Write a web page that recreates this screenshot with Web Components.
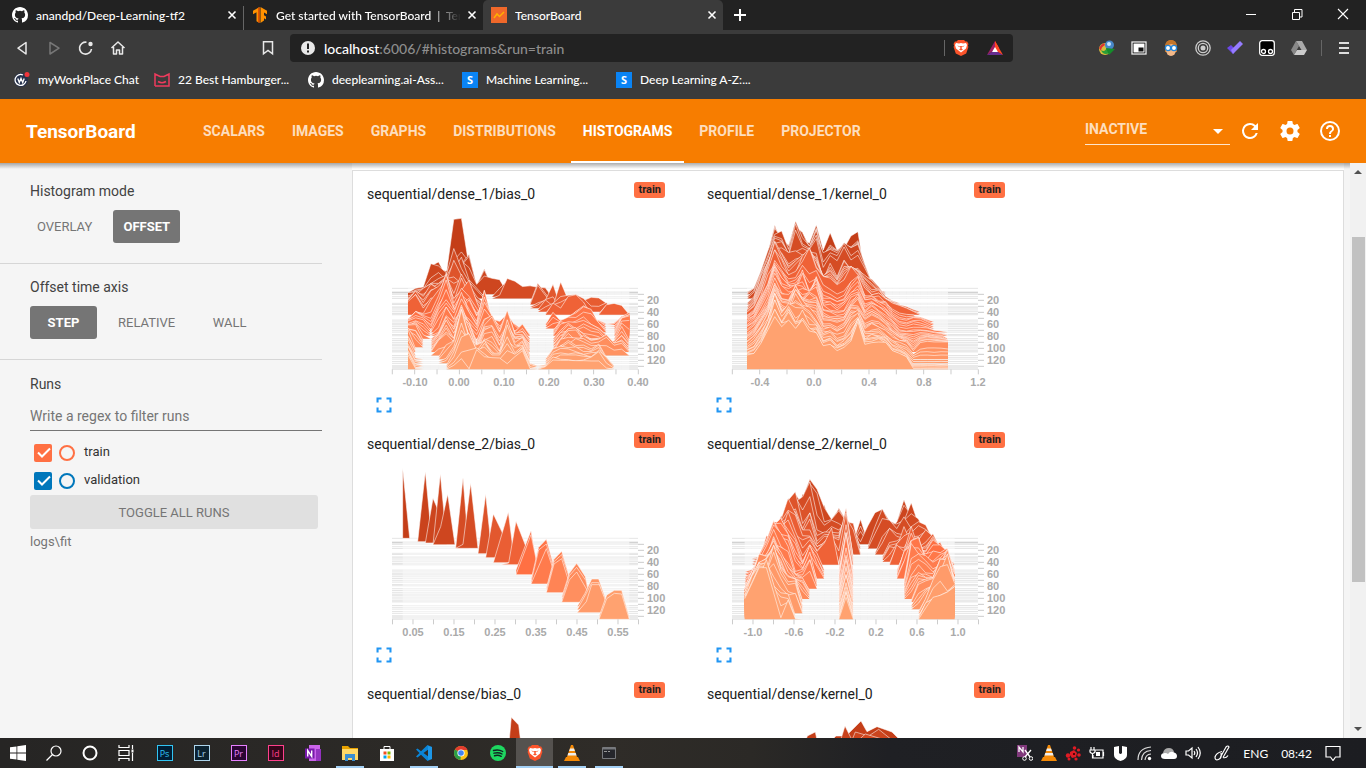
<!DOCTYPE html>
<html lang="en">
<head>
<meta charset="utf-8">
<title>TensorBoard</title>
<style>
html,body{margin:0;height:100%;overflow:hidden}
body{font-family:Roboto,"Liberation Sans",sans-serif;font-size:14px;color:#424242;background:#f5f5f5}
</style>
</head>
<body>
<desktop-screen></desktop-screen>
<script>
const define = (name, html, setup) => customElements.define(name, class extends HTMLElement {
  connectedCallback() {
    if (this.shadowRoot) return;
    const t = document.createElement('template');
    t.innerHTML = '<style>*{box-sizing:border-box}button{font:inherit;border:0;background:none;padding:0;color:inherit}svg{display:block}a{color:inherit;text-decoration:none}</style>' +
      (typeof html === 'function' ? html(this) : html);
    this.attachShadow({mode: 'open'}).append(t.content.cloneNode(true));
    if (setup) setup(this);
  }
});
const CAT = '<path fill="#fff" d="M8 0C3.58 0 0 3.58 0 8c0 3.54 2.29 6.53 5.47 7.59.4.07.55-.17.55-.38 0-.19-.01-.82-.01-1.49-2.01.37-2.53-.49-2.69-.94-.09-.23-.48-.94-.82-1.13-.28-.15-.68-.52-.01-.53.63-.01 1.08.58 1.23.82.72 1.21 1.87.87 2.33.66.07-.52.28-.87.51-1.07-1.78-.2-3.64-.89-3.64-3.95 0-.87.31-1.59.82-2.15-.08-.2-.36-1.02.08-2.12 0 0 .67-.21 2.2.82a7.6 7.6 0 0 1 4 0c1.53-1.04 2.2-.82 2.2-.82.44 1.1.16 1.92.08 2.12.51.56.82 1.27.82 2.15 0 3.07-1.87 3.75-3.65 3.95.29.25.54.73.54 1.48 0 1.07-.01 1.93-.01 2.2 0 .21.15.46.55.38A8.01 8.01 0 0 0 16 8c0-4.42-3.58-8-8-8z"/>';
const LION = '<path fill="#fb542b" d="M5 0h6l1.500 1.600 1.600-.2 1.400 2.600-.6 1.500.5 1.500-2.200 6.500L8 16 2.800 13.500.6 7l.5-1.500L.5 4l1.400-2.600 1.600.2z"/><path fill="#fff" d="M3 3l3 .5L8 3l2 .5L13 3l1 2-1 3.500-2.500 2L8 12.500l-2.500-2L3 8.500 2 5z"/><path fill="#fb542b" d="M4.200 5.500l2.600.7-.3 1zM11.800 5.500l-2.600.7.3 1zM7 6h2l-.4 2.500L10 9.500 8 10.500 6 9.500l1.400-1z"/>';
const CONE = '<path fill="#f58a07" d="M7 0h2l4 12H3z"/><path fill="#eee" d="M6 3.500h4l.9 2.500H5.100zM4.300 8h7.400l.8 2.500h-9z"/><path fill="#f58a07" d="M2 12h12l2 4H0z"/>';
const ICONS = {
  github: CAT, brave: LION, cone: CONE,
  tensor: '<path fill="#ff9100" d="M7.500 0v16l-3-1.800V5.300L1 7.300V3.800zM8.500 0L15 3.800v3.500l-3-1.700v2.600l2 1.200v3l-2-1.200v2.200L8.500 16z"/><path fill="#e65100" d="M7.500 0v16l-1.500-1V1z"/>',
  board: '<path fill="#f0682a" d="M0 0h16v16H0z"/><path fill="none" stroke="#ffb000" stroke-width="1.500" d="M3 11l3-4 2.500 2.500L13 5"/>',
  close: '<path fill="none" stroke="#fff" stroke-width="1.800" d="M4 4l8 8M12 4l-8 8"/>',
  plus: '<path stroke="#fff" stroke-width="2" d="M8 2v12M2 8h12"/>',
  min: '<path stroke="#fff" d="M3 7.500h10"/>',
  max: '<path fill="none" stroke="#fff" d="M3.500 5.500h7v7h-7zM5.500 5v-2.500h7.500v7.500H11"/>',
  wclose: '<path stroke="#fff" d="M3 2l10 10M13 2L3 12" stroke-width="1.100"/>',
  back: '<path fill="none" stroke="#e8e8e8" stroke-width="1.500" stroke-linejoin="round" d="M12 2.500v11.500L4 8.200z"/>',
  fwd: '<path fill="none" stroke="#777" stroke-width="1.500" stroke-linejoin="round" d="M4 2.500v11.500l9-5.800z"/>',
  reload: '<path fill="none" stroke="#e8e8e8" stroke-width="1.600" d="M13.500 9A6 6 0 1 1 8.500 2.200"/><circle cx="12.500" cy="4" r="2.200" fill="#e8e8e8"/>',
  home: '<path fill="none" stroke="#e8e8e8" stroke-width="1.500" stroke-linejoin="round" d="M1.500 8L8 2l6.500 6M3.500 7v7h3V10h3v4h3V7"/>',
  mark: '<path fill="none" stroke="#e8e8e8" stroke-width="1.500" d="M3.500 1.800h9v12L8 10.500l-4.500 3.300z"/>',
  warn: '<circle cx="8" cy="8" r="7" fill="#e8e8e8"/><path fill="#222" d="M7 3.500h2V9H7zM7 10.500h2v2H7z"/>',
  bat: '<path fill="#ff4724" d="M8 1l4 7-4 2z"/><path fill="#9e1f63" d="M8 1L0 15l8-5z"/><path fill="#662d91" d="M0 15h16l-8-5z"/><path fill="#ff4724" d="M8 1l8 14-8-5z"/><path fill="#fff" d="M8 7l3 5H5z"/>',
  idm: '<circle cx="6" cy="9" r="6" fill="#d8bf3d"/><path fill="#d33" d="M0 8q1-3 5-5l1 2Q2 7 2 11z"/><path fill="#2c9e38" d="M2 10q4 3 6-3l3 6q-7 3-9-3z"/><circle cx="10.500" cy="5" r="4.500" fill="#4787c8"/><circle cx="10" cy="4" r="2" fill="#c5e3ff"/><path fill="#158c2b" d="M7 8l9 1-6 6z"/>',
  pip: '<rect x="1" y="2" width="14" height="12" fill="#111" stroke="#eee" stroke-width="1.300"/><path fill="#fff" d="M2.500 3.500h11v9h-11z"/><path fill="#111" d="M7.500 7.500h5v4h-5z"/>',
  face: '<path fill="#c4762b" d="M2 12V6q1-6 6-6t6 6v6z"/><ellipse cx="8" cy="10" rx="5" ry="6" fill="#f3b98a"/><path fill="#c4762b" d="M2 5q2-5 6-5t6 5l-5-1z"/><circle cx="5" cy="8" r="2.600" fill="#fff" stroke="#2186dd" stroke-width="1.300"/><circle cx="11" cy="8" r="2.600" fill="#fff" stroke="#2186dd" stroke-width="1.300"/>',
  target: '<g fill="none" stroke="#ccc" stroke-width="1.300"><circle cx="8" cy="8" r="7.200"/><circle cx="8" cy="8" r="4.700"/></g><circle cx="8" cy="8" r="2.500" fill="#ccc"/>',
  tick: '<path fill="#6c48e8" d="M0 8l4-3 5 5-3 4z"/><path fill="#957cff" d="M6 14l-2-4 9-9 3 3z"/>',
  panda: '<rect x=".7" y=".7" width="14.600" height="14.600" rx="2.500" fill="#000" stroke="#fff" stroke-width="1.300"/><g fill="none" stroke="#fff" stroke-width="1.300"><circle cx="4.500" cy="11.500" r="2"/><circle cx="11.500" cy="11.500" r="2"/></g>',
  drive: '<path fill="#888" d="M5 1L0 10l3 5 5-9z"/><path fill="#aaa" d="M5 1h6l5 9h-5.500z"/><path fill="#ccc" d="M3 15l3-5h10l-3 5z"/>',
  menu: '<path stroke="#ddd" stroke-width="2" d="M3 3h10M3 8h10M3 13h10"/>',
  chat: '<circle cx="7" cy="8" r="7" fill="#26324d"/><path fill="none" stroke="#fff" stroke-width="1.300" d="M12 9a5.500 5.500 0 1 1-3-6M3.800 6.500l1.500 4 1.700-4 1.700 4 1.500-4"/><circle cx="13" cy="2.500" r="2.500" fill="#f0353b"/>',
  burger: '<path fill="none" stroke="#ef3b5d" stroke-width="1.500" d="M1 14V2l5 2.500h4L15 2v12H1M4 9.500q4 2.500 8 0"/>',
  refresh: '<path fill="#fff" d="M17.650 6.350A7.960 7.960 0 0 0 12 4a8 8 0 1 0 7.730 10h-2.080A6 6 0 1 1 12 6c1.660 0 3.140.69 4.220 1.780L13 11h7V4z"/>',
  gear: '<path fill="#fff" d="M19.430 12.980c.04-.32.07-.64.07-.98s-.03-.66-.07-.98l2.110-1.650c.19-.15.24-.42.12-.64l-2-3.460c-.12-.22-.39-.3-.61-.22l-2.490 1c-.52-.4-1.080-.73-1.690-.98l-.38-2.650A.488.488 0 0 0 14 2h-4c-.25 0-.46.18-.49.42l-.38 2.650c-.61.25-1.170.59-1.690.98l-2.490-1c-.23-.09-.49 0-.61.22l-2 3.460c-.13.22-.07.49.12.64l2.110 1.650c-.04.32-.07.65-.07.98s.03.66.07.98l-2.110 1.650c-.19.15-.24.42-.12.64l2 3.460c.12.22.39.3.61.22l2.490-1c.52.4 1.080.73 1.690.98l.38 2.650c.03.24.24.42.49.42h4c.25 0 .46-.18.49-.42l.38-2.650c.61-.25 1.170-.59 1.690-.98l2.490 1c.23.09.49 0 .61-.22l2-3.460c.12-.22.07-.49-.12-.64zM12 15.500a3.500 3.500 0 1 1 0-7 3.500 3.500 0 0 1 0 7z"/>',
  help: '<path fill="#fff" d="M11 18h2v-2h-2v2zm1-16a10 10 0 1 0 0 20 10 10 0 0 0 0-20zm0 18a8 8 0 1 1 0-16 8 8 0 0 1 0 16zm0-14a4 4 0 0 0-4 4h2c0-1.100.9-2 2-2s2 .9 2 2c0 2-3 1.750-3 5h2c0-2.250 3-2.500 3-5a4 4 0 0 0-4-4z"/>',
  full: '<path fill="#2196f3" d="M3 3h6v2.500H5.500V9H3zM15 3h6v6h-2.500V5.500H15zM3 15h2.500v3.500H9V21H3zM18.500 15H21v6h-6v-2.500h3.500z"/>',
  win: '<path fill="#fff" d="M0 2.300L6.500 1.400v6.200H0zM7.300 1.300L16 0v7.600H7.300zM0 8.400h6.500v6.200L0 13.700zM7.300 8.400H16V16l-8.700-1.300z"/>',
  search: '<g fill="none" stroke="#fff" stroke-width="1.200"><circle cx="10" cy="6" r="5"/><path d="M6.500 9.500L.5 15.500"/></g>',
  ring: '<circle cx="8" cy="8" r="6.500" fill="none" stroke="#fff" stroke-width="2"/>',
  task: '<path fill="none" stroke="#fff" stroke-width="1.200" d="M1 0v2.500h10V0M1 5.500h10v5H1zM1 16v-2.500h10V16M14.500 0v4M14.500 8v8"/><path fill="#fff" d="M13.500 4.500h2v3h-2z"/>',
  onenote: '<path fill="#ca64ea" d="M4 0h11v16H4z"/><path fill="#9332bf" d="M11 4h5v12h-5z"/><path fill="#7719aa" d="M0 3.500h9.500v10H0z"/><path fill="none" stroke="#fff" stroke-width="1.400" d="M2.700 11.500v-6l4 6v-6"/>',
  folder: '<path fill="#e8a200" d="M0 1h6l2 2h8v4H0z"/><path fill="#ffd867" d="M0 4h16v11H0z"/><path fill="#3b8ed0" d="M3 16V9h10v7h-3v-3H6v3z"/>',
  store: '<path fill="#fff" d="M1 4h14v12H1z"/><path fill="none" stroke="#fff" d="M5 4V1.500h6V4"/><path fill="#f25022" d="M4.500 6.500h3v3h-3z"/><path fill="#7fba00" d="M8.500 6.500h3v3h-3z"/><path fill="#00a4ef" d="M4.500 10.500h3v3h-3z"/><path fill="#ffb900" d="M8.500 10.500h3v3h-3z"/>',
  code: '<path fill="#0a84d6" d="M11.500 0L16 2v12l-4.500 2L5 9.800 1.500 12.500 0 11.500 3.500 8 0 4.500l1.500-1L5 6.200zM12 4.700L7.500 8l4.500 3.300z" fill-rule="evenodd"/><path fill="#2aa4f4" d="M12 1L16 2v12l-4 1z" opacity=".6"/>',
  chrome: '<circle cx="8" cy="8" r="7" fill="#fbc116"/><path fill="#e33b2e" d="M8 8L2 4.500A7 7 0 0 1 14.500 5H8z"/><path fill="#2a9d48" d="M8 8l-.5 7A7 7 0 0 1 2 4.500z"/><circle cx="8" cy="8" r="3.600" fill="#fff"/><circle cx="8" cy="8" r="2.800" fill="#4285f4"/>',
  spotify: '<circle cx="8" cy="8" r="8" fill="#1ed760"/><path fill="none" stroke="#122" stroke-width="1.400" stroke-linecap="round" d="M3.500 5.500q5-1.500 9.200 1M4 8.200q4.500-1.300 8 .8M4.500 10.700q3.800-1 6.700.6"/>',
  term: '<rect x="1" y="2" width="14" height="12" rx="1" fill="#77797d"/><path fill="#25262b" d="M2 4.500h12v8.500H2z"/><path stroke="#999" d="M3 6.500h3M7 6.500h2" fill="none"/>',
  snip: '<path fill="#80397b" d="M0 0h10v12H0z"/><path fill="none" stroke="#fff" stroke-width="1.300" d="M2 7V2l4 5V2M8 5l5 7M14 5l-6 7"/><circle cx="7.500" cy="13.500" r="1.800" fill="none" stroke="#fff"/><circle cx="14" cy="13.500" r="1.800" fill="none" stroke="#fff"/>',
  blob: '<g fill="#e01b24"><path d="M5 7l4-2 3 3-1 4-4 1-2-3z"/><circle cx="3" cy="10.500" r="2.200"/><circle cx="9.500" cy="3" r="1.800"/><circle cx="13.500" cy="5" r="1.600"/><circle cx="14" cy="10" r="1.800"/><circle cx="11" cy="14" r="1.600"/><circle cx="4" cy="14" r="1.500"/></g><circle cx="9" cy="9" r="1" fill="#200"/>',
  power: '<path fill="none" stroke="#fff" stroke-width="1.200" d="M6 5h8v8H4v-3M14.500 7v4M2 2v3M5 2v3M1 5h5v2q-2.500 3-5 0zM3.500 9v4H5"/><path fill="#fff" d="M7 7h4v4H7z"/>',
  shield: '<path fill="#fff" d="M1 2l5-1v7q1.500 2 3 0V1l5 1v8q0 4-6.500 6Q1 14 1 10z"/>',
  wifi: '<g fill="none" stroke="#ddd" stroke-width="1.200"><path d="M1 15Q1 3 14 2M4.500 15Q5 6 14 5.500M8 15q.5-5.500 6-6"/></g><circle cx="12.500" cy="13.500" r="1.700" fill="#fff"/>',
  cloud: '<path fill="#aaa" d="M2 8q1-5 6-5 4 0 5 4l-5 4z"/><path fill="#fff" d="M4 14q-4 0-4-3t4-3q2 0 3 1 2-3 5-2 4 1 4 4 0 3-3 3z"/>',
  sound: '<path fill="none" stroke="#fff" stroke-width="1.200" d="M1 6v4h2.500L7 13V3L3.500 6zM9 6q1.500 2 0 4M11 4q3 4 0 8M13 2q4.500 6 0 12"/>',
  pen: '<path fill="none" stroke="#fff" stroke-width="1.200" d="M6.500 12L12 2q2-2 3 0L9 12.500M8 6.500Q2 8 1 12q0 4 3.500 2.500T7 8M9 12.500q3 1 5-2"/>',
  note: '<path fill="none" stroke="#fff" stroke-width="1.200" d="M1 1.500h14v10.500h-4.500L8 15.500 5.500 12H1z"/>'
};
define('ui-icon', h => {
  const n = h.getAttribute('name'), s = h.getAttribute('size') || 16;
  const big = ['refresh', 'gear', 'help', 'full'].includes(n) ? 24 : 16;
  return `<style>:host{display:block;flex:none;width:${s}px;height:${s}px}</style><svg width="${s}" height="${s}" viewBox="0 0 ${big} ${big}" aria-hidden="true">${ICONS[n]}</svg>`;
});
const icon = (n, s = 16) => `<ui-icon name="${n}" size="${s}"></ui-icon>`;

define('s-logo', `<style>:host{display:grid;place-items:center;width:16px;height:16px;background:#0a84f5;color:#fff;font:bold 11px "Open Sans",sans-serif;flex:none}</style>S`);

define('browser-tab', h => `<style>
:host{display:flex;align-items:center;width:240px;height:30px;padding:0 4px 0 8px;border-left:1px solid transparent}
:host([divided]){border-image:linear-gradient(transparent 7px,#666 7px) 1}
:host([active]){background:#3b3b3b;border:0;border-radius:5px 5px 0 0}
span{flex:1;margin-left:8px;overflow:hidden;white-space:nowrap}
:host([fade]) span{-webkit-mask-image:linear-gradient(90deg,#000 155px,transparent 185px)}
</style>${icon(h.getAttribute('icon'))}<span><slot></slot></span><button aria-label="Close tab">${icon('close', 14)}</button>`);

define('browser-chrome', `<style>
:host{display:block;background:#3b3b3b;color:#fff;font:500 12px Lato,"Open Sans",sans-serif}
.tabs{display:flex;height:30px;background:#222;padding-left:3px;align-items:center}
.new{padding:0 9px}
.win{margin-left:auto;display:flex}.win button{width:46px;height:30px;display:grid;place-items:center}
.bar{display:flex;height:36px;align-items:center;padding:0 14px}
.nav{display:flex;gap:16px;margin-right:134px}
.url{flex:1;height:28px;margin:0 86px 0 14px;background:#222;border-radius:4px;display:flex;align-items:center;gap:8px;padding:0 10px;font-size:14px}
.url a{flex:1;color:#8e8e8e}.url b{font-weight:500;color:#fff}
.url i{width:1px;height:16px;background:#666}
.url .bat{margin-left:10px}
.ext{display:flex;gap:16px;align-items:center}.ext i{width:1px;height:16px;background:#666;margin-right:-2px;margin-left:-2px}
.marks{display:flex;height:33px;align-items:center;padding:0 14px 6px;white-space:nowrap}
.marks a{display:flex;align-items:center;gap:8px;width:154px}
.marks a:first-child{width:140px}
</style>
<div class="tabs"><browser-tab icon="github">anandpd/Deep-Learning-tf2</browser-tab><browser-tab icon="tensor" divided fade>Get started with TensorBoard &nbsp;|&nbsp; Ten</browser-tab><browser-tab icon="board" active>TensorBoard</browser-tab>
<button class="new" aria-label="New tab">${icon('plus')}</button>
<div class="win"><button aria-label="Minimize">${icon('min')}</button><button aria-label="Restore">${icon('max')}</button><button aria-label="Close">${icon('wclose')}</button></div></div>
<div class="bar"><div class="nav"><button aria-label="Back">${icon('back')}</button><button aria-label="Forward">${icon('fwd')}</button><button aria-label="Reload">${icon('reload')}</button><button aria-label="Home">${icon('home')}</button></div>
<button aria-label="Bookmark">${icon('mark')}</button>
<div class="url">${icon('warn')}<a href="#histograms&run=train"><b>localhost</b>:6006/#histograms&amp;run=train</a><i></i>${icon('brave')}<span class="bat">${icon('bat')}</span></div>
<div class="ext">${['idm', 'pip', 'face', 'target', 'tick', 'panda', 'drive'].map(n => icon(n)).join('')}<i></i>${icon('menu')}</div></div>
<nav class="marks"><a href="#">${icon('chat')}myWorkPlace Chat</a><a href="#">${icon('burger')}22 Best Hamburger...</a><a href="#">${icon('github')}deeplearning.ai-Ass...</a><a href="#"><s-logo></s-logo>Machine Learning...</a><a href="#"><s-logo></s-logo>Deep Learning A-Z:...</a></nav>`);

define('board-header', `<style>
:host{display:flex;height:64px;background:#f77d00;color:#fff;align-items:center;padding:0 24px 0 26px;font-weight:700;position:relative;z-index:2}
h1{font-size:19px;font-weight:700;margin:0;width:165px}
nav{display:flex;gap:3px;height:64px;flex:1}
a{padding:0 12px;line-height:64px;color:rgba(255,255,255,.75);border-bottom:2px solid transparent;height:64px}
a.on{color:#fff;border-color:#fff}
.sel{position:relative;width:145px;margin-right:8px}
select{appearance:none;width:100%;height:28px;border:0;border-bottom:1px solid rgba(255,255,255,.8);background:none;color:rgba(255,255,255,.75);font:700 14px Roboto,sans-serif;padding:0 0 3px}
.sel svg{position:absolute;right:7px;top:12px}
.acts{display:flex;gap:16px}
</style><h1>TensorBoard</h1>
<nav><a href="#scalars">SCALARS</a><a href="#images">IMAGES</a><a href="#graphs">GRAPHS</a><a href="#distributions">DISTRIBUTIONS</a><a class="on" href="#histograms">HISTOGRAMS</a><a href="#profile">PROFILE</a><a href="#projector">PROJECTOR</a></nav>
<div class="sel"><select aria-label="Inactive dashboards"><option>INACTIVE</option></select><svg width="10" height="5"><path fill="#fff" d="M0 0h10L5 5z"/></svg></div>
<div class="acts"><button aria-label="Reload">${icon('refresh', 24)}</button><button aria-label="Settings">${icon('gear', 24)}</button><button aria-label="Help">${icon('help', 24)}</button></div>`);

define('option-group', `<style>:host{display:block;padding:13px 0 20px 30px;border-bottom:1px solid #d6d6d6}
h3{margin:0 0 9px;font-weight:400;font-size:14px;line-height:20px;color:#424242}
div{display:flex;gap:14px}
</style><h3><slot name="heading"></slot></h3><div><slot></slot></div>`);

define('run-row', h => {
  const c = h.getAttribute('color'), n = h.getAttribute('run');
  return `<style>:host{display:flex;height:28px;align-items:center;padding-left:4px;font-size:13px;color:#333}
input{appearance:none;margin:0;flex:none}
[type=checkbox]{width:18px;height:18px;border-radius:2px;background:${c} url('data:image/svg+xml,<svg xmlns="http://www.w3.org/2000/svg" width="18" height="18"><path fill="none" stroke="white" stroke-width="2" d="M4 8.500l4 4 8-8"/></svg>')}
[type=radio]{width:16px;height:16px;border:2px solid ${c};border-radius:50%;margin:0 9px 0 7px}
label{padding-bottom:3px}</style><input type="checkbox" id="c" checked><input type="radio" aria-label="Only ${n}"><label for="c">${n}</label>`;
});

define('side-bar', `<style>
:host{display:block;width:352px;flex:none;padding:5px 30px 0 0;background:#f5f5f5}
section{padding:14px 0 0 30px}
h3{margin:0;font-weight:400;font-size:14px;line-height:20px;color:#424242}
.opt{min-width:67px;height:33px;border-radius:3px;padding:0 7px;font-size:13px;color:#757575}
.opt.on{background:#757575;color:#fff;font-weight:700}
.filter{width:100%;height:30px;margin:7px 0 8px;border:0;border-bottom:1px solid #757575;background:none;padding:0;font:14px Roboto,sans-serif;outline:0}
.filter::placeholder{color:#757575;opacity:1}
.all{display:block;width:288px;height:34px;border-radius:3px;background:#e0e0e0;color:#757575;font-size:13px}
p{margin:4px 0;font-size:13px;line-height:18px;color:#757575}
</style>
<option-group><span slot="heading">Histogram mode</span><button class="opt">OVERLAY</button><button class="opt on">OFFSET</button></option-group>
<option-group><span slot="heading">Offset time axis</span><button class="opt on">STEP</button><button class="opt">RELATIVE</button><button class="opt">WALL</button></option-group>
<section><h3>Runs</h3><input class="filter" aria-label="Filter runs" placeholder="Write a regex to filter runs">
<run-row run="train" color="#ff7043"></run-row><run-row run="validation" color="#0077bb"></run-row>
<button class="all">TOGGLE ALL RUNS</button><p>logs\\fit</p></section>`);

/* Plot space: 3 units per pixel; step 0 sits at y 385, 1.8 units per step. */
const STEPS = [0,6,7,8,10,14,17,25,27,31,33,36,39,42,44,53,56,59,61,64,67,70,73,77,79,84,87,90,93,95,98,101,104,106,112,115,118,122,125,129,131,133,135];
const mix = (a, b, t) => a.map((v, i) => Math.round(v + (b[i] - v) * t));
const shade = t => {
  const c = t < .45 ? mix([196,62,24], [255,112,67], t / .45) : mix([255,112,67], [255,162,112], (t - .45) / .55);
  return `rgb(${c})`;
};
const noise = (i, j) => { const s = Math.sin(i * 12.9898 + j * 78.233) * 43758.5453; return (s - Math.floor(s)) * 2 - 1; };
const CHARTS = {
  bias1: {x0: 168, x1: 832, wobble: .32, ticks: ['-0.10','0.00','0.10','0.20','0.30','0.40'], first: 188, gap: 134.2, keys: [
    [0,  [0,0,0,0,0,40,207,210,65,0]],
    [6,  [0,3,5,80,70,62,95,120,90,22,63,10,0]],
    [10, [5,18,22,92,85,65,70,100,80,30,55,48,44,5]],
    [17, [18,20,30,45,60,70,150,90,50,25,0,0,10,60,52,36,38,34,32,0]],
    [25, [22,30,38,60,60,80,120,75,55,20,0,0,0,0,0,0,0,60,30,0]],
    [31, [24,40,38,55,70,85,90,70,60,20,0,0,0,0,0,0,0,12,20,68,0]],
    [36, [28,50,30,60,65,95,80,90,70,20,0,0,0,0,0,0,0,0,30,12,84,30,46,28,38,36,20,0]],
    [44, [40,60,20,50,48,95,40,110,60,10,0,0,0,0,0,0,0,0,0,35,20,55,60,38,0,0,30,34,28,0]],
    [53, [4,25,20,60,90,118,65,90,120,55,0]],
    [61, [16,40,25,10,60,95,50,60,80,30,80,20,0,0,0,0,0,0,0,38,12,20,40,52,28,12,0,3,26,28]],
    [73, [26,34,25,0,40,75,40,100,60,20,105,40,32,55,20,0,0,0,0,0,35,45,44,60,55,28,0,0,42,46]],
    [79, [30,38,16,0,10,60,40,80,40,15,80,50,30,40,12,35,0,0,0,0,35,42,40,46,34,22,0,0,44,46]],
    [93, [45,40,0,0,30,70,30,80,60,0,50,70,40,80,28,22,0,0,0,0,25,45,48,30,14,18,0,5,26,0]],
    [106,[46,0,0,0,35,55,30,105,50,0,55,60,20,85,40,40,0,0,0,0,38,44,42,40,26,30,44,20,26,0]],
    [122,[44,4,0,0,0,10,45,115,50,50,60,30,10,110,50,45,0,0,0,38,46,42,44,30,30,42,0]],
    [131,[44,4,0,0,0,0,30,90,100,50,60,36,36,70,35,58,8,0,3,24,36,36,36,32,30,50,28,0]],
    [135,[43,2,0,0,0,0,12,32,2,59,38,35,34,17,38,56,2,0,8,28,27,27,26,26,25,25,4,0]]]},
  kernel1: {x0: 165, x1: 768, wobble: .1, ticks: ['-0.4','0.0','0.4','0.8','1.2'], first: 203, gap: 164, keys: [
    [0,  [0,0,35,105,190,130,130,200,150,135,190,115,167,115,120,157,170,40,0]],
    [10, [0,18,70,130,180,190,135,220,170,145,175,125,135,125,155,140,150,90,35,10,0]],
    [25, [0,20,80,120,180,185,150,155,165,155,150,70,120,80,130,100,105,80,72,50,20,8,0]],
    [44, [8,25,70,135,195,145,120,130,160,200,140,115,110,90,105,145,120,80,60,65,48,35,28,20,10,0]],
    [61, [20,35,75,120,180,140,120,110,165,90,145,80,80,70,75,110,130,75,78,70,60,30,18,14,22,20,10,0]],
    [77, [25,40,70,110,170,125,115,140,120,125,140,75,70,65,70,100,115,72,90,72,58,40,14,10,14,14,12,8,4,0]],
    [106,[30,48,75,115,170,125,120,175,140,135,110,68,75,62,75,105,115,70,85,75,65,45,35,30,4,28,32,30,30,30]],
    [122,[36,45,80,125,185,130,165,130,145,130,110,72,76,60,68,90,125,75,80,78,72,50,42,28,6,6,6,6,6,6]],
    [135,[43,48,78,118,158,128,148,123,148,115,110,71,75,56,66,85,143,75,80,82,81,56,48,38,3,3,3,3,3,3]]]},
  bias2: {x0: 152, x1: 832, ticks: ['0.05','0.15','0.25','0.35','0.45','0.55'], first: 183, gap: 123, keys: [], polys: [
    [0,'152,385 152,175 173,385'],[6,'197,395 220,185 240,395'],[8,'220,399 243,265 256,295 262,399'],[10,'243,404 265,192 285,404'],[10,'243,404 266,350 287,253 309,404'],[17,'311,415 333,203 350,415'],[17,'311,415 333,403 356,220 378,415'],[25,'378,431 401,253 420,431'],[31,'401,443 424,312 452,370 462,443'],[39,'424,458 469,307 488,458'],[44,'445,464 470,459 492,334 522,410 522,464'],
    [56,'492,493 492,480 537,362 560,493'],[61,'492,494 537,374 562,494'],[67,'537,510 560,412 583,388 606,470'],[70,'537,518 560,420 583,402 606,480'],[77,'537,522 583,416 604,480 604,522'],[84,'583,535 606,448 629,424 652,500'],[87,'583,540 606,455 629,434 654,510'],[91,'583,548 606,462 629,446 652,520 652,548'],
    [98,'629,562 652,490 674,460 700,500 712,550'],[103,'629,570 652,497 674,472 702,512 712,560'],[107,'629,577 652,510 674,486 705,540 705,577'],[115,'675,590 699,550 719,507 740,507 764,575'],[119,'675,600 703,550 719,518 740,518 764,590'],[125,'675,608 703,575 719,524 742,524 760,570 756,608'],[129,'741,620 764,555 787,541 809,541 832,622'],[135,'741,628 764,566 787,550 809,552 832,628']]},
  kernel2: {x0: 158, x1: 788, wobble: .25, ticks: ['-1.0','-0.6','-0.2','0.2','0.6','1.0'], first: 183, gap: 123, keys: [
    [0,  [0]],
    [6,  [0,0,0,0,0,0,0,40,100,60,100,110,50,90,65,0,68,0,0,0,40,50,120,60,40,0]],
    [10, [0,0,0,0,0,0,60,120,140,195,165,110,75,105,70,40,8,55,95,105,70,60,70,125,60,30,0]],
    [17, [0,0,0,0,0,70,135,140,155,200,100,70,85,75,60,60,0,0,45,90,85,60,95,60,75,40,20,0]],
    [25, [0,0,0,0,65,110,130,170,130,170,70,60,80,70,95,90,0,0,0,50,75,60,55,80,95,85,40,10,0]],
    [36, [0,0,5,50,90,120,185,140,90,90,40,50,70,60,155,0,0,0,0,0,40,35,100,50,60,90,70,30,0]],
    [44, [0,0,10,80,105,95,160,100,50,75,40,65,110,0,120,0,0,0,0,0,0,60,40,115,50,50,85,50,20,0]],
    [61, [0,10,50,95,150,140,120,70,35,85,50,0,0,0,115,0,0,0,0,0,0,0,70,90,95,60,90,90,70,5]],
    [77, [0,30,75,115,165,115,90,30,40,75,0,0,0,0,110,0,0,0,0,0,0,0,0,110,110,80,70,90,100,40]],
    [93, [12,60,95,120,160,110,60,45,40,0,0,0,0,0,100,0,0,0,0,0,0,0,0,50,60,60,50,90,105,60]],
    [112,[40,80,130,140,170,100,65,65,0,0,0,0,0,0,90,0,0,0,0,0,0,0,0,0,36,50,60,110,120,80]],
    [125,[55,95,150,150,110,75,55,60,0,0,0,0,0,0,80,0,0,0,0,0,0,0,0,0,0,45,100,140,146,90]],
    [131,[58,104,152,152,85,60,55,0,0,0,0,0,0,0,72,0,0,0,0,0,0,0,0,0,0,40,55,65,75,92]],
    [135,[62,108,155,155,80,5,58,2,0,0,0,0,0,0,66,0,0,0,0,0,0,0,0,0,0,34,66,72,82,98]]]},
  bias0: {x0: 168, x1: 832, ticks: [], first: 188, gap: 134, keys: [], polys: [[0,'470,260 478,172 500,195 508,260']]},
  kernel0: {x0: 165, x1: 768, ticks: [], first: 203, gap: 164, keys: [], polys: [[0,'342,240 346,228 370,216 375,240'],[0,'420,240 432,228 462,228 507,183 525,215 555,200 600,216 624,240'],[5,'446,240 459,198 480,240'],[8,'480,240 490,216 530,228 560,208 600,240'],[12,'500,240 520,222 560,234 580,240']]}
};
const at = (keys, s, k) => {
  let i = 0;
  while (i < keys.length - 2 && keys[i + 1][0] <= s) i++;
  const [a, b] = [keys[i], keys[i + 1]], t = (s - a[0]) / (b[0] - a[0]);
  const u = a[1][k] || 0, v = b[1][k] || 0;
  return (u === 0 && t < .6) || (v === 0 && t > .5) ? 0 : u + (v - u) * t;
};
const plot = c => {
  let out = '', labels = '';
  for (const s of STEPS) {
    const y = 385 + s * 1.8;
    out += `<path stroke="#000" stroke-opacity=".11" stroke-width="3" d="M120 ${y}H858"/>`;
  }
  for (const s of STEPS) {
    const y = 385 + s * 1.8;
    if (c.keys.length) {
      let top = '';
      for (let k = 0; k < 30; k++) {
        const h = at(c.keys, s, k), exact = c.keys.some(q => q[0] === s);
        top += `${k ? 'L' : 'M'}${(c.x0 + (c.x1 - c.x0) * k / 29).toFixed(1)} ${(y - h * (1 + (exact ? 0 : noise(Math.floor(s / 6), k) * c.wobble))).toFixed(1)}`;
      }
      out += `<path fill="${shade(s / 135)}" d="${top}L${c.x1} ${y}H${c.x0}z"/><path fill="none" stroke="#fff" stroke-opacity=".55" stroke-width="3" d="${top}"/>`;
    } else out += `<path fill="none" stroke="#fff" stroke-opacity=".55" stroke-width="3" d="M${c.x0} ${y}H${c.x1}"/>`;
  }
  for (const [s, p] of c.polys || []) out += `<polygon fill="${shade(s / 135)}" stroke="#fff" stroke-opacity=".55" stroke-width="3" points="${p}"/>`;
  for (let x = c.first - c.gap / 2; x < 862; x += c.gap / 2) out += `<path stroke="#ccc" stroke-width="3" d="M${x} 628v15"/>`;
  for (let s = 10; s < 135; s += 10) out += `<path stroke="#ccc" stroke-width="3" d="M858 ${385 + s * 1.8}h18"/>`;
  c.ticks.forEach((t, i) => labels += `<text text-anchor="middle" x="${Math.round((c.first + c.gap * i) / 3) - 15}" y="181">${t}</text>`);
  if (c.ticks.length) for (let s = 20; s < 130; s += 20) labels += `<text x="280" y="${87 + s * .6}">${s}</text>`;
  return `<g transform="translate(-15,-45) scale(.333333)">${out}</g><g font-family="Liberation Sans,sans-serif" font-size="11" font-weight="700" fill="#aaa">${labels}</g>`;
};
define('histogram-card', h => `<style>
:host{display:block;height:250px;padding-top:11px}
header{display:flex;justify-content:space-between;height:23px;padding-right:2px}
h4{margin:0;font-weight:400;font-size:14px;line-height:24px;color:#212121}
b{height:16px;border-radius:3px;background:#ff7043;color:#212121;font-size:11px;line-height:15px;font-weight:700;padding:0 4px}
svg{overflow:visible}
button{margin:3px 0 0 7px;display:block}
</style><header><h4><slot></slot></h4><b>train</b></header>
<svg width="300" height="187" role="img">${plot(CHARTS[h.getAttribute('data')])}</svg>
<button aria-label="Expand">${icon('full', 20)}</button>`);

define('chart-pane', `<style>
:host{display:block;flex:1;min-width:0;overflow:hidden;background:#fff;padding-top:7px}
div{display:grid;grid-template-columns:repeat(auto-fill,300px);gap:0 40px;padding:0 14px;border:1px solid #ddd;border-bottom:0}
</style><div>
<histogram-card data="bias1">sequential/dense_1/bias_0</histogram-card>
<histogram-card data="kernel1">sequential/dense_1/kernel_0</histogram-card>
<histogram-card data="bias2">sequential/dense_2/bias_0</histogram-card>
<histogram-card data="kernel2">sequential/dense_2/kernel_0</histogram-card>
<histogram-card data="bias0">sequential/dense/bias_0</histogram-card>
<histogram-card data="kernel0">sequential/dense/kernel_0</histogram-card>
</div>`);

define('scroll-track', `<style>
:host{display:flex;flex-direction:column;align-items:center;width:16px;background:#f1f1f1;margin-left:6px;padding:7px 0}
i{width:13px;background:#c1c1c1;flex:342;margin:0 0 0 1px}
.a{flex:63}.b{flex:144}
</style><svg width="8" height="4"><path fill="#505050" d="M0 4l4-4 4 4z"/></svg><span class="a"></span><i></i><span class="b"></span><svg width="8" height="4"><path fill="#505050" d="M0 0h8L4 4z"/></svg>`);

define('adobe-tile', h => {
  const [c, bg] = h.getAttribute('tint').split(' ');
  return `<style>:host{display:grid;place-items:center;width:16px;height:16px;border:1px solid ${c};background:${bg};color:${c};font:9px "Open Sans",sans-serif}</style><slot></slot>`;
});
define('task-bar', `<style>
:host{display:flex;height:30px;background:linear-gradient(90deg,#262524,#2f2c28 45%,#2b2926 55%,#1f2024 65%,#1c1d21);color:#fff;align-items:center;font:12px Lato,"Open Sans",sans-serif}
.apps{display:flex;flex:1}
.apps button{width:37px;height:30px;display:grid;place-items:center}
.apps .sys{width:36px}
.sys+:not(.sys){margin-left:2px}
.open{background:linear-gradient(#a3d0f5,#a3d0f5) center bottom/28px 2px no-repeat}
.now{background:linear-gradient(#a3d0f5,#a3d0f5) bottom/100% 2px no-repeat #55524f}
.tray{display:flex;align-items:center;gap:8px;padding-right:25px}
.tray span{margin-left:5px}
</style><div class="apps">
${['win', 'search', 'ring', 'task'].map(n => `<button class="sys" aria-label="${n}">${icon(n)}</button>`).join('')}
<button aria-label="Photoshop"><adobe-tile tint="#31c5f4 #001d34">Ps</adobe-tile></button><button aria-label="Lightroom"><adobe-tile tint="#add5ec #0b2230">Lr</adobe-tile></button><button aria-label="Premiere"><adobe-tile tint="#e680ff #2a0634">Pr</adobe-tile></button><button aria-label="InDesign"><adobe-tile tint="#ff408c #34061a">Id</adobe-tile></button>
${['onenote', 'folder', 'store', 'code', 'chrome', 'spotify', 'brave', 'cone', 'term'].map(n => `<button aria-label="${n}" class="${n === 'brave' ? 'now' : ['folder', 'code', 'cone', 'term'].includes(n) ? 'open' : ''}">${icon(n)}</button>`).join('')}
</div><div class="tray">${['snip', 'cone', 'blob', 'power', 'shield', 'wifi', 'cloud', 'sound'].map(n => icon(n)).join('')}<span>${icon('pen')}</span><span>ENG</span><span>08:42</span><span>${icon('note')}</span></div>`);

define('desktop-screen', `<style>
:host{display:flex;flex-direction:column;height:100vh}
main{flex:1;min-height:0;display:flex;position:relative;background:#f5f5f5;overflow:hidden}
.shade{position:absolute;inset:0 16px auto 0;height:6px;background:linear-gradient(rgba(0,0,0,.32),transparent)}
</style><browser-chrome></browser-chrome><board-header></board-header>
<main><side-bar></side-bar><chart-pane></chart-pane><scroll-track></scroll-track><div class="shade"></div></main><task-bar></task-bar>`);
</script>
</body>
</html>
